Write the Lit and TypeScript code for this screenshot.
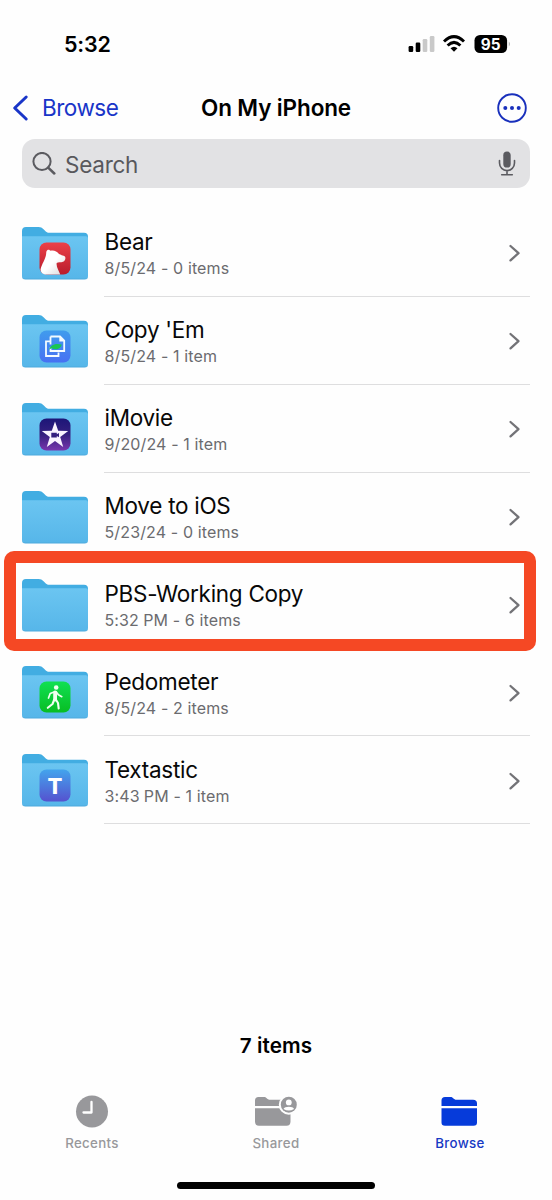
import { LitElement, html, svg, css, nothing } from "lit";
import { customElement, property } from "lit/decorators.js";

const appIcons: Record<string, unknown> = {
  bear: svg`
    <defs><linearGradient id="app" x1="0" y1="0" x2="0" y2="1"><stop offset="0" stop-color="#ec4048"/><stop offset="1" stop-color="#b91d2c"/></linearGradient>
    <linearGradient id="fur" x1="0" y1="0" x2="1" y2="1"><stop offset=".5" stop-color="#fff"/><stop offset="1" stop-color="#d9d6d8"/></linearGradient></defs>
    <rect width="31" height="32" rx="7" fill="url(#app)"/>
    <path d="M1 27C2.500 21 5.500 17.500 6.500 12.500C7 10 6.300 8.600 8 7.500C9.400 6.700 10.500 7.800 11.200 8.300C14.500 7.600 17.500 9 19.500 11.500C21.500 12.800 25.200 13.100 25.700 14.500C26.300 16.200 25.500 18.500 23.500 19.300C21.500 20.100 18.500 19.500 17.200 20.500C16.500 24 19.300 28 20.800 32H7C3.500 32 1.300 30 1 27Z" fill="url(#fur)"/>`,
  copy: svg`
    <defs><linearGradient id="app" x1="0" y1="0" x2="0" y2="1"><stop offset="0" stop-color="#409ced"/><stop offset="1" stop-color="#4771f3"/></linearGradient></defs>
    <rect width="31" height="32" rx="7" fill="url(#app)"/>
    <g fill="none" stroke="#f4fbff" stroke-width="1.800"><path d="M10.500 10.800H6.500V25.500H19V22"/><path d="M11 6H20.500L24.700 10.200V20.500H11V17"/><path d="M11 6V14"/></g>
    <path d="M19.800 5.500L25.200 10.900H19.800Z" fill="#f4fbff"/>
    <path d="M9.300 19.500C11 14.500 15.500 12.200 22.200 14C21.600 18.300 16.500 20 12.200 17.800C10.800 18.300 10 18.800 9.300 19.500Z" fill="#19c653"/>`,
  imovie: svg`
    <defs><linearGradient id="app" x1="0" y1="0" x2="0" y2="1"><stop offset="0" stop-color="#1c1678"/><stop offset=".5" stop-color="#35207f"/><stop offset="1" stop-color="#7936ae"/></linearGradient></defs>
    <rect width="31" height="32" rx="7" fill="url(#app)"/>
    <path d="M15.500 3L18.700 12.300L28.700 12.500L20.700 18.500L23.700 28.500L15.500 22.600L7.300 28.500L10.300 18.500L2.300 12.500L12.300 12.300Z" fill="#faf4ff"/>
    <path d="M11.800 14.200h5.500v1.500l2.200-1.200v4.200l-2.200-1.200v1.400h-5.500Z" fill="#35207f"/>`,
  walk: svg`
    <defs><linearGradient id="app" x1="0" y1="0" x2="0" y2="1"><stop offset="0" stop-color="#10e052"/><stop offset="1" stop-color="#08bd23"/></linearGradient></defs>
    <rect width="31" height="31" rx="7" fill="url(#app)"/>
    <circle cx="16.700" cy="6" r="2.300" fill="#f0fff0"/>
    <g fill="none" stroke="#f0fff0" stroke-linecap="round" stroke-linejoin="round"><path d="M15.600 11V18" stroke-width="3.800"/><path d="M15.300 10.200L10.700 12L9 16.500M16.800 10.500L18.900 13.300L22.300 15.200" stroke-width="1.700"/><path d="M14.800 18L13 22.500L8.300 26.300M16 17.500L18.500 21.500L19.200 27" stroke-width="2.100"/></g>`,
  text: svg`
    <defs><linearGradient id="app" x1="0" y1="0" x2="0" y2="1"><stop offset="0" stop-color="#43a4ed"/><stop offset="1" stop-color="#5552cf"/></linearGradient></defs>
    <rect width="31" height="32" rx="7" fill="url(#app)"/>
    <text x="15.500" y="24.300" text-anchor="middle" font-family="Inter, sans-serif" font-size="22" font-weight="800" fill="#fff">T</text>`,
};

@customElement("folder-icon")
class FolderIcon extends LitElement {
  @property() app = "";
  static styles = css`
    :host { display: block; width: 66px; height: 53px; }
    svg { display: block; }
  `;
  render() {
    return html`<svg width="66" height="53" viewBox="0 0 66 53">
      <defs><linearGradient id="front" x1="0" y1="0" x2="0" y2="1"><stop offset="0" stop-color="#6bc5f1"/><stop offset="1" stop-color="#56b6e9"/></linearGradient></defs>
      <path d="M0 49V4Q0 0 4 0H16.500C19 0 20 .7 21.300 2L23.800 4.400C24.800 5.300 25.800 5.700 27.200 5.700H62Q66 5.700 66 9.700V20H0Z" fill="#42ade2"/>
      <path d="M0 9.300H64Q66 9.300 66 11.300V49Q66 52.300 62.700 52.300H3.300Q0 52.300 0 49Z" fill="url(#front)"/>
      <path d="M.5 51Q1.500 52 3.300 52H62.700Q64.500 52 65.500 51" fill="none" stroke="#4ca6d9" stroke-width=".7"/>
      ${this.app ? svg`<g transform="translate(17.500 15.500)">${appIcons[this.app]}</g>` : nothing}
    </svg>`;
  }
}

@customElement("folder-row")
class FolderRow extends LitElement {
  @property() name = "";
  @property() detail = "";
  @property() app = "";
  @property({ type: Boolean }) plain = false;
  static styles = css`
    :host { display: flex; height: 87.900px; box-sizing: border-box; padding-left: 22px; gap: 16px; }
    folder-icon { margin-top: 18px; flex: none; }
    .body { flex: 1; display: flex; align-items: center; justify-content: space-between; margin-right: 22px; border-bottom: 1.300px solid #dededf; }
    .plain { border-color: transparent; }
    .words { padding: 4px 0 0 0.5px; white-space: pre; }
    .name { font-size: 22.500px; line-height: 28px; color: #080808; letter-spacing: -0.28px; }
    .detail { font-size: 16px; line-height: 24px; color: #6b6b6f; letter-spacing: 0.13px; }
    svg { margin: 2px 9px 0 0; flex: none; }
  `;
  render() {
    return html`<folder-icon .app=${this.app}></folder-icon>
      <div class="body ${this.plain ? "plain" : ""}">
        <div class="words"><div class="name">${this.name}</div><div class="detail">${this.detail}</div></div>
        <svg width="14" height="20" viewBox="0 0 14 20"><path d="M3.500 3L11.500 10.200L3.500 17.400" fill="none" stroke="#737377" stroke-width="2.300" stroke-linecap="round" stroke-linejoin="round"/></svg>
      </div>`;
  }
}

const folders = [
  { name: "Bear", detail: "8/5/24 - 0 items", app: "bear" },
  { name: "Copy 'Em", detail: "8/5/24 - 1 item", app: "copy" },
  { name: "iMovie", detail: "9/20/24 - 1 item", app: "imovie" },
  { name: "Move to iOS", detail: "5/23/24 - 0 items", app: "" },
  { name: "PBS-Working Copy", detail: "5:32\u2005PM - 6 items", app: "" },
  { name: "Pedometer", detail: "8/5/24 - 2 items", app: "walk" },
  { name: "Textastic", detail: "3:43\u2005PM - 1 item", app: "text" },
];

@customElement("app-root")
class AppRoot extends LitElement {
  static styles = css`
    :host { display: flex; flex-direction: column; width: 552px; height: 1200px; background: #fefefe; font-family: Inter, "Liberation Sans", sans-serif; color: #000; overflow: hidden; }
    svg { display: block; flex: none; }
    .status { height: 80px; box-sizing: border-box; padding: 8px 41px 0 64px; display: flex; align-items: center; justify-content: space-between; }
    .time { font-size: 21.500px; font-weight: 600; letter-spacing: -0.2px; }
    .nav { height: 55px; display: grid; grid-template-columns: 1fr auto 1fr; align-items: center; padding: 0 24px; }
    .back { display: flex; align-items: center; gap: 13px; margin-left: -12px; font-size: 22.500px; letter-spacing: -0.5px; color: #1935c8; }
    .title { font-size: 22.500px; font-weight: 600; letter-spacing: -0.12px; }
    .more { justify-self: end; }
    .search { margin: 4px 22px 0; height: 49px; box-sizing: border-box; border-radius: 13px; background: #e2e2e4; display: flex; align-items: center; gap: 9px; padding: 1px 14px 0 10px; font-size: 22.500px; letter-spacing: -0.25px; color: #58585c; }
    .search span { flex: 1; }
    .list { margin-top: 21px; position: relative; }
    .mark { position: absolute; left: 4px; top: 342px; width: 532px; height: 100px; box-sizing: border-box; border-radius: 10px; background: #f54824; clip-path: path(evenodd, "M0 0H532V100H0ZM12 12V88H520V12Z"); }
    .count { margin-top: auto; text-align: center; font-size: 20.700px; line-height: 28px; font-weight: 600; letter-spacing: 0.1px; }
    .tabs { margin-top: 29px; height: 68px; display: grid; grid-template-columns: repeat(3, 184px); }
    .tab { padding-top: 1px; display: flex; flex-direction: column; align-items: center; gap: 2px; font-size: 13.300px; line-height: 18px; font-weight: 500; letter-spacing: 0.35px; color: #98989b; }
    .active { color: #1739c4; }
    .home { width: 198px; height: 7px; border-radius: 4px; background: #000; margin: 25px auto 11px; }
  `;
  render() {
    return html`
      <div class="status">
        <div class="time">5:32</div>
        <svg width="103" height="20" viewBox="0 0 103 20">
          <rect x=".6" y="12" width="4.600" height="6" rx="1.200"/><rect x="7.700" y="8.500" width="4.600" height="9.500" rx="1.200"/>
          <rect x="14.700" y="5" width="4.600" height="13" rx="1.200" fill="#c9c9c9"/><rect x="21.800" y="2" width="4.600" height="16" rx="1.200" fill="#c9c9c9"/>
          <g fill="none" stroke="#000" stroke-width="2.900"><path d="M36 7.500Q46 -2.200 56 7.500"/><path d="M39.600 11.500Q46 5.200 52.400 11.500"/></g>
          <path d="M42.500 14.300Q46 11.200 49.500 14.300L46 17.800Z"/>
          <rect x="66.500" y="1" width="32.600" height="18" rx="5.500"/><path d="M100.800 7.500Q103 10 100.800 12.500Z" fill="#aaa"/>
          <text x="82.700" y="15.500" text-anchor="middle" font-family="Inter, sans-serif" font-size="15.300" font-weight="700" fill="#fff">95</text>
        </svg>
      </div>
      <div class="nav">
        <div class="back"><svg width="17" height="28" viewBox="0 0 17 28"><path d="M14.200 3L2.700 14L14.200 25" fill="none" stroke="#1935c8" stroke-width="3" stroke-linecap="round" stroke-linejoin="round"/></svg><span>Browse</span></div>
        <div class="title">On My iPhone</div>
        <svg class="more" width="32" height="32" viewBox="0 0 32 32"><circle cx="16" cy="16" r="13.800" fill="none" stroke="#1930bc" stroke-width="1.900"/><g fill="#1930bc"><circle cx="9.300" cy="16" r="2"/><circle cx="16" cy="16" r="2"/><circle cx="22.700" cy="16" r="2"/></g></svg>
      </div>
      <div class="search">
        <svg width="24" height="24" viewBox="0 0 24 24" fill="none" stroke="#5b5b60" stroke-width="2" stroke-linecap="round"><circle cx="10" cy="9.500" r="8.600"/><path d="M16.200 15.700L22.300 21.500" stroke-width="2.500"/></svg>
        <span>Search</span>
        <svg width="18" height="26" viewBox="0 0 18 26"><rect x="5.300" y=".6" width="7.400" height="16" rx="3.700" fill="#5b5b60"/><path d="M1.500 9.600V12.100A7.500 7.500 0 0 0 16.500 12.100V9.600M9 19.600V23.800M3.700 23.800H14.300" fill="none" stroke="#5b5b60" stroke-width="1.600" stroke-linecap="round"/></svg>
      </div>
      <div class="list">
        ${folders.map((f, i) => html`<folder-row .name=${f.name} .detail=${f.detail} .app=${f.app} .plain=${i === 3 || i === 4}></folder-row>`)}
        <div class="mark"></div>
      </div>
      <div class="count">7 items</div>
      <div class="tabs">
        <div class="tab"><svg width="34" height="42" viewBox="0 0 34 42"><circle cx="17" cy="21.500" r="16" fill="#98989b"/><path d="M16.500 12V22.500H8.500" fill="none" stroke="#fff" stroke-width="2.300" stroke-linecap="round" stroke-linejoin="round"/></svg>Recents</div>
        <div class="tab"><svg width="44" height="42" viewBox="1 0 44 42"><path d="M2 16V10.500Q2 7 5.500 7H11C14 7 14 9.800 17 9.800H33.500Q37.500 9.800 37.500 13.500V16ZM2 18.200H37.500V31.500Q37.500 35.700 33.500 35.700H6Q2 35.700 2 31.500Z" fill="#98989b"/><circle cx="35.800" cy="14.700" r="10" fill="#fefefe"/><circle cx="35.800" cy="14.700" r="8" fill="#98989b"/><circle cx="35.800" cy="12.400" r="2.900" fill="#fff"/><path d="M30.500 19C31.500 16 40.100 16 41.100 19Q35.800 22 30.500 19Z" fill="#fff"/></svg>Shared</div>
        <div class="tab active"><svg width="38" height="42" viewBox="1 0 38 42"><path d="M1.500 16V10.500Q1.500 7 5 7H10.500C13.500 7 13.500 9.800 16.500 9.800H33Q37 9.800 37 13.500V16ZM1.500 18.200H37V32.500Q37 35.700 33.500 35.700H5Q1.500 35.700 1.500 32.500Z" fill="#063bda"/></svg>Browse</div>
      </div>
      <div class="home"></div>
    `;
  }
}
